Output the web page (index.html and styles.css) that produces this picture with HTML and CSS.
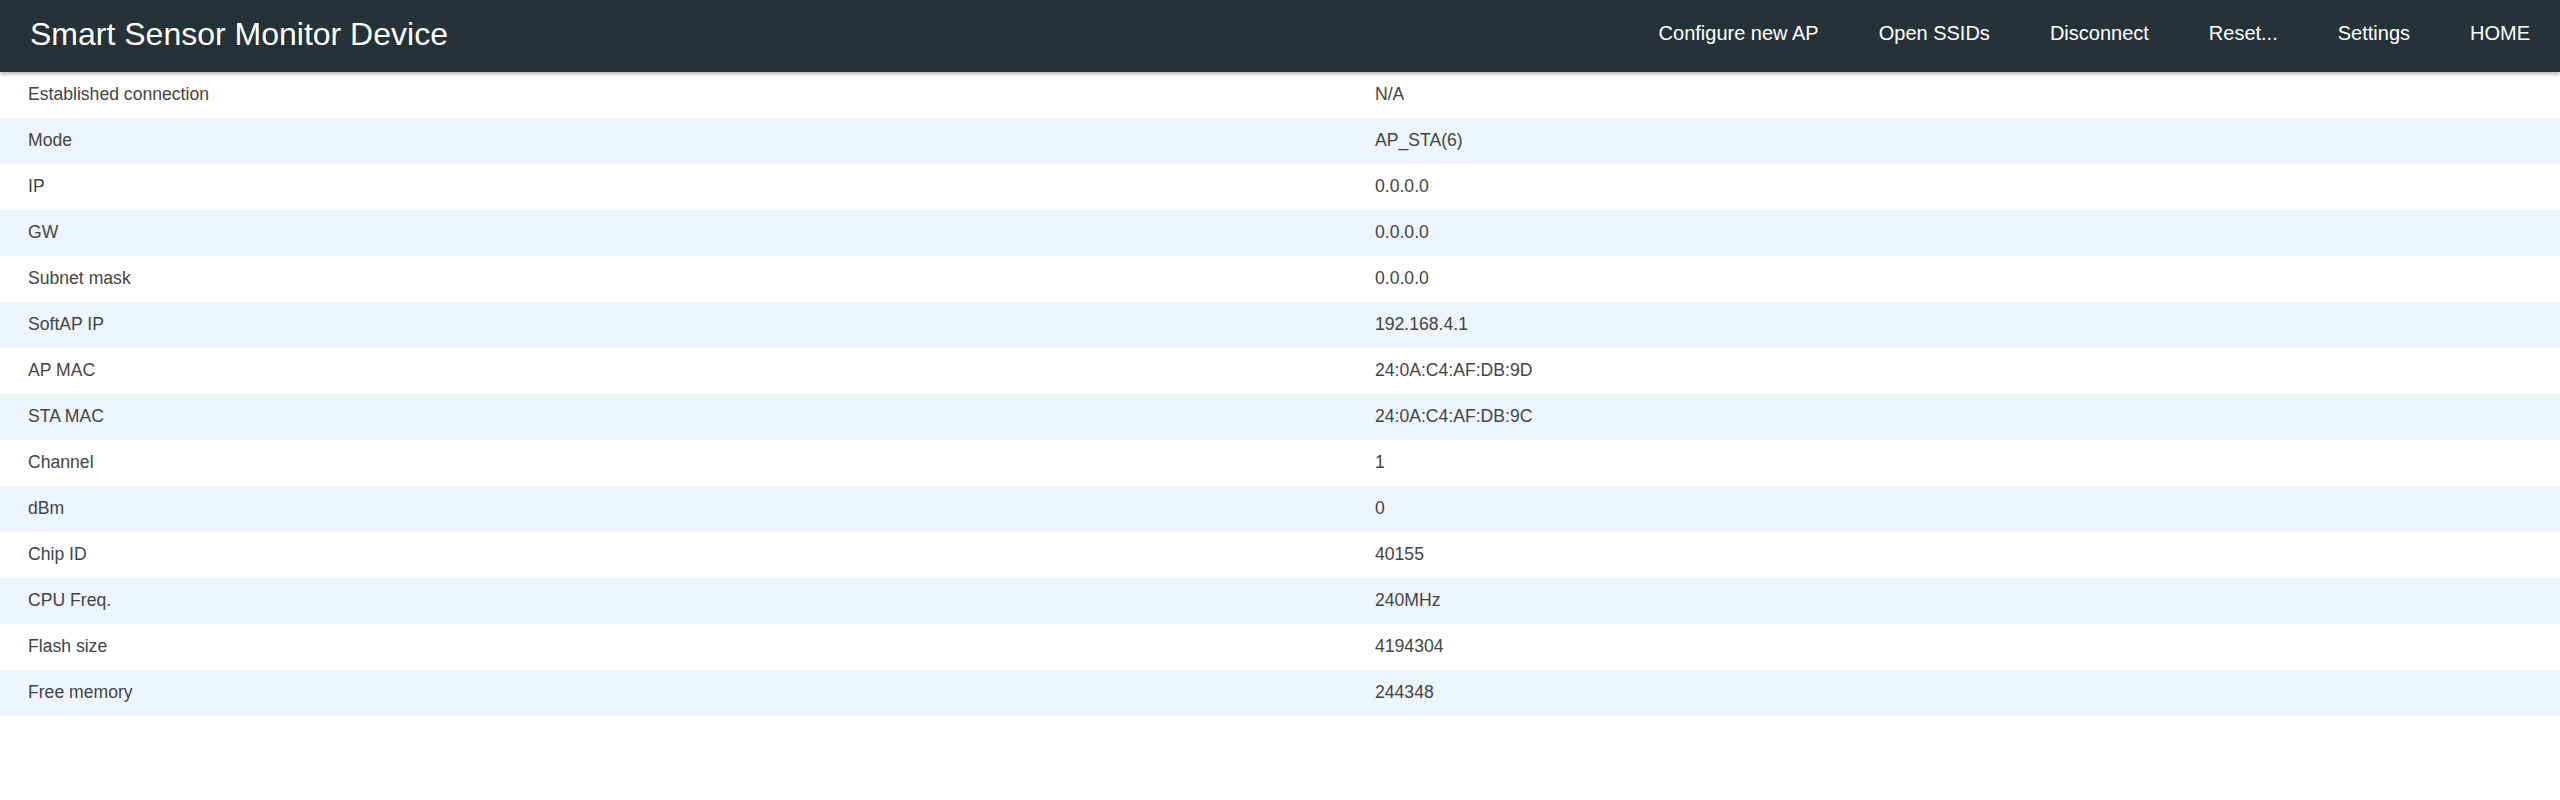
FILE: index.html
```html
<!DOCTYPE html>
<html>
<head>
<meta charset="utf-8">
<title>Smart Sensor Monitor Device</title>
<link rel="stylesheet" href="styles.css">
</head>
<body>
<header class="topbar">
  <div class="brand">Smart Sensor Monitor Device</div>
  <nav class="nav">
    <a class="nav-link" href="#">Configure new AP</a>
    <a class="nav-link" href="#">Open SSIDs</a>
    <a class="nav-link" href="#">Disconnect</a>
    <a class="nav-link" href="#">Reset...</a>
    <a class="nav-link" href="#">Settings</a>
    <a class="nav-link" href="#">HOME</a>
  </nav>
</header>
<main class="info">
  <div class="row"><div class="cell">Established connection</div><div class="cell">N/A</div></div>
  <div class="row"><div class="cell">Mode</div><div class="cell">AP_STA(6)</div></div>
  <div class="row"><div class="cell">IP</div><div class="cell">0.0.0.0</div></div>
  <div class="row"><div class="cell">GW</div><div class="cell">0.0.0.0</div></div>
  <div class="row"><div class="cell">Subnet mask</div><div class="cell">0.0.0.0</div></div>
  <div class="row"><div class="cell">SoftAP IP</div><div class="cell">192.168.4.1</div></div>
  <div class="row"><div class="cell">AP MAC</div><div class="cell">24:0A:C4:AF:DB:9D</div></div>
  <div class="row"><div class="cell">STA MAC</div><div class="cell">24:0A:C4:AF:DB:9C</div></div>
  <div class="row"><div class="cell">Channel</div><div class="cell">1</div></div>
  <div class="row"><div class="cell">dBm</div><div class="cell">0</div></div>
  <div class="row"><div class="cell">Chip ID</div><div class="cell">40155</div></div>
  <div class="row"><div class="cell">CPU Freq.</div><div class="cell">240MHz</div></div>
  <div class="row"><div class="cell">Flash size</div><div class="cell">4194304</div></div>
  <div class="row"><div class="cell">Free memory</div><div class="cell">244348</div></div>
</main>
</body>
</html>
```
FILE: styles.css
```css
html, body {
  margin: 0;
  padding: 0;
  background: #ffffff;
  font-family: "Liberation Sans", Arial, sans-serif;
}

.topbar {
  height: 72px;
  background: #263238;
  display: flex;
  align-items: center;
  justify-content: space-between;
  box-shadow: 0 2px 4px rgba(0, 0, 0, 0.3);
  position: relative;
  z-index: 1;
}

.brand {
  color: #ffffff;
  font-size: 32px;
  padding-left: 30px;
  line-height: 1;
  margin-bottom: 4px;
}

.nav {
  display: flex;
  margin-bottom: 6px;
}

.nav-link {
  color: #ffffff;
  text-decoration: none;
  font-size: 20px;
  padding: 0 30px;
  line-height: 1;
}

.info {
  display: flex;
  flex-direction: column;
}

.row {
  display: grid;
  grid-template-columns: 1347px 1fr;
  box-sizing: border-box;
  height: 46px;
  padding-bottom: 2px;
  align-items: center;
  color: #444444;
  font-size: 17.6px;
}

.row:nth-child(even) {
  background: #edf4fc;
}

.cell {
  padding-left: 28px;
}
```
